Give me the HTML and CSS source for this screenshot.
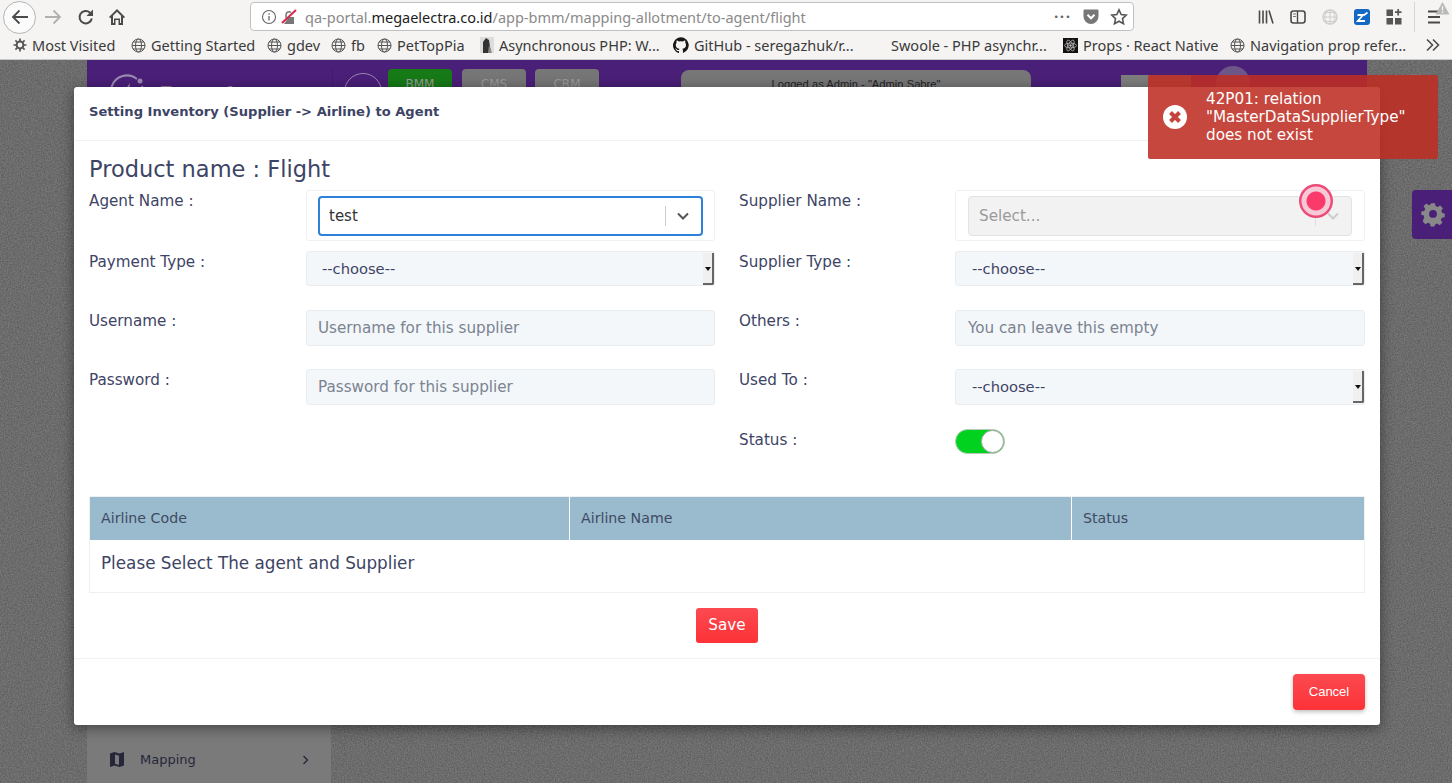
FILE: index.html
```html
<!DOCTYPE html>
<html lang="en">
<head>
  <meta charset="UTF-8" />
  <title>Mapping Allotment</title>
  <link rel="stylesheet" href="styles.css">
</head>
<body>
  <div class="toolbar">
    <button class="back-btn" title="Back">
      <svg width="18" height="18" viewBox="0 0 18 18"><path d="M17 9H2M8.500 2.500 2 9l6.500 6.500" fill="none" stroke="#4a4a4a" stroke-width="1.800"/></svg>
    </button>
    <svg class="tool-icon forward" width="18" height="18" viewBox="0 0 18 18"><path d="M1 9h15M9.500 2.500 16 9l-6.500 6.500" fill="none" stroke="#b0b0b0" stroke-width="1.800"/></svg>
    <svg class="tool-icon reload" width="18" height="18" viewBox="0 0 18 18"><path d="M14.800 10.500a6.200 6.200 0 1 1-1.800-5.800L15 6.800" fill="none" stroke="#4a4a4a" stroke-width="2"/><path d="M16 1.500v6.500H9.500z" fill="#4a4a4a"/></svg>
    <svg class="tool-icon home" width="18" height="18" viewBox="0 0 18 18"><path d="M9 1 1 9l1.300 1.300L3 9.600V17h4.500v-5h3v5H15V9.600l.7.7L17 9z" fill="#4a4a4a"/><path d="M9 3.800 5 7.800V15h1V10.500h6V15h1V7.800z" fill="#f5f4f3"/></svg>
    <div class="urlbar">
      <svg class="url-info" width="16" height="16" viewBox="0 0 16 16"><circle cx="8" cy="8" r="6.500" fill="none" stroke="#666" stroke-width="1.100"/><path d="M8 7v4.500M8 4.300v1.400" stroke="#666" stroke-width="1.300"/></svg>
      <svg class="url-lock" width="16" height="16" viewBox="0 0 16 16"><path d="M3 15 8 8h5v7z" fill="#777"/><path d="M5 9V5.500a3 3 0 0 1 5-2" fill="none" stroke="#777" stroke-width="1.500"/><path d="M1 14 15 1" stroke="#d7264a" stroke-width="2"/></svg>
      <div class="url-text">qa-portal.<span class="url-domain">megaelectra.co.id</span>/app-bmm/mapping-allotment/to-agent/flight</div>
      <div class="url-dots">•••</div>
      <svg class="url-pocket" width="18" height="18" viewBox="0 0 18 18"><path d="M2.500 1.500h13a1 1 0 0 1 1 1v6a7.500 7.500 0 0 1-15 0v-6a1 1 0 0 1 1-1z" fill="#777"/><path d="M5.500 6.800 9 10.300l3.500-3.500" fill="none" stroke="#fff" stroke-width="2"/></svg>
      <svg class="url-star" width="18" height="18" viewBox="0 0 18 18"><path d="m9 1.800 2.200 4.700 5.100.6-3.800 3.500 1 5.100L9 13.200l-4.500 2.500 1-5.100-3.800-3.500 5.100-.6z" fill="none" stroke="#555" stroke-width="1.600"/></svg>
    </div>
    <div class="tool-right">
      <svg width="18" height="18" viewBox="0 0 18 18"><path d="M2.500 2.500v13M6 2.500v13M9.500 2.500v13M12 2.500l4 13" fill="none" stroke="#4a4a4a" stroke-width="1.600"/></svg>
      <svg width="18" height="18" viewBox="0 0 18 18"><rect x="2" y="3" width="14" height="12" rx="2.500" fill="none" stroke="#4a4a4a" stroke-width="1.600"/><path d="M8.500 3v12" stroke="#4a4a4a" stroke-width="1.400"/><path d="M4 6h3M4 8.500h3" stroke="#777"/></svg>
      <svg width="18" height="18" viewBox="0 0 18 18"><circle cx="9" cy="9" r="7" fill="none" stroke="#ccc" stroke-width="1.300"/><path d="M2 9h14M9 2v14M4 4.500h10M4 13.500h10M5.500 3.500c-2 4-2 7 0 11M12.500 3.500c2 4 2 7 0 11" fill="none" stroke="#ccc"/></svg>
      <svg width="18" height="18" viewBox="0 0 18 18"><rect x="1" y="1" width="16" height="16" rx="3" fill="#1268c3"/><path d="M4.500 7h5.500L4.800 13h7.200" fill="none" stroke="#fff" stroke-width="1.800"/><path d="M10.500 7.500l4-3" stroke="#fff" stroke-width="1.600"/></svg>
      <svg width="18" height="18" viewBox="0 0 18 18"><path d="M1.500 1.500h6.500v6.500H1.500zM1.500 10h6.500v6.500H1.500zM10 10h6.500v6.500H10z" fill="#555"/><path d="M13.200 1v6.500M10 4.200h6.500" stroke="#555" stroke-width="1.700"/></svg>
      <div class="tool-sep"></div>
      <div class="menu-btn">
        <svg width="18" height="18" viewBox="0 0 18 18"><path d="M2 3.500h12M2 9h12M2 14.500h12" stroke="#4a4a4a" stroke-width="1.800"/></svg>
        <svg class="menu-alert" width="15" height="14" viewBox="0 0 15 14"><path d="M7.500 1 14.500 13.500H.5z" fill="#b9b9b9"/><path d="M7.500 5v4.500M7.500 10.500v1.500" stroke="#f5f4f3" stroke-width="1.300"/></svg>
      </div>
    </div>
  </div>

  <div class="bookmarks">
    <div class="bm">
      <svg width="14" height="14" viewBox="0 0 14 14"><circle cx="7" cy="7" r="3.400" fill="none" stroke="#555" stroke-width="2"/><path d="M7 .5v3M7 10.500v3M.5 7h3M10.500 7h3M2.400 2.400l2.100 2.100M9.500 9.500l2.100 2.100M2.400 11.600l2.100-2.100M9.500 4.500l2.100-2.100" stroke="#555" stroke-width="1.700"/></svg>
      Most Visited
    </div>
    <div class="bm">
      <svg class="globe" width="15" height="15" viewBox="0 0 15 15"><circle cx="7.500" cy="7.500" r="6.500"/><ellipse cx="7.500" cy="7.500" rx="3" ry="6.500"/><path d="M1 7.500h13M2 4h11M2 11h11"/></svg>
      Getting Started
    </div>
    <div class="bm">
      <svg class="globe" width="15" height="15" viewBox="0 0 15 15"><circle cx="7.500" cy="7.500" r="6.500"/><ellipse cx="7.500" cy="7.500" rx="3" ry="6.500"/><path d="M1 7.500h13M2 4h11M2 11h11"/></svg>
      gdev
    </div>
    <div class="bm">
      <svg class="globe" width="15" height="15" viewBox="0 0 15 15"><circle cx="7.500" cy="7.500" r="6.500"/><ellipse cx="7.500" cy="7.500" rx="3" ry="6.500"/><path d="M1 7.500h13M2 4h11M2 11h11"/></svg>
      fb
    </div>
    <div class="bm">
      <svg class="globe" width="15" height="15" viewBox="0 0 15 15"><circle cx="7.500" cy="7.500" r="6.500"/><ellipse cx="7.500" cy="7.500" rx="3" ry="6.500"/><path d="M1 7.500h13M2 4h11M2 11h11"/></svg>
      PetTopPia
    </div>
    <div class="bm">
      <svg width="14" height="16" viewBox="0 0 14 16"><rect width="14" height="16" fill="#ddd"/><path d="M3 16V5l3-4 3 2 2 13z" fill="#333"/><path d="M9 8l3 8H8z" fill="#888"/></svg>
      Asynchronous PHP: W...
    </div>
    <div class="bm">
      <svg width="16" height="16" viewBox="0 0 16 16"><path d="M8 .3a8 8 0 0 0-2.500 15.600c.4.100.5-.2.500-.4v-1.400c-2.200.5-2.700-1-2.700-1-.4-.9-.9-1.200-.9-1.200-.7-.5.100-.5.100-.5.800.100 1.200.8 1.200.8.700 1.200 1.900.9 2.300.7.100-.5.300-.9.500-1.100-1.800-.2-3.700-.9-3.700-4 0-.9.300-1.600.8-2.100-.1-.2-.4-1 .1-2.100 0 0 .7-.2 2.200.8a7.600 7.600 0 0 1 4 0c1.500-1 2.200-.8 2.200-.8.400 1.100.2 1.900.1 2.100.5.600.8 1.300.8 2.100 0 3.100-1.900 3.700-3.700 3.900.3.300.6.800.6 1.500v2.200c0 .2.100.5.600.4A8 8 0 0 0 8 .3z" fill="#161616"/></svg>
      GitHub - seregazhuk/r...
    </div>
    <div class="bm">Swoole - PHP asynchr...</div>
    <div class="bm">
      <svg width="15" height="15" viewBox="0 0 15 15"><rect width="15" height="15" fill="#111"/><circle cx="7.500" cy="7.500" r="1.200" fill="#bbb"/><g fill="none" stroke="#bbb" stroke-width=".8"><ellipse cx="7.500" cy="7.500" rx="6" ry="2.400"/><ellipse cx="7.500" cy="7.500" rx="6" ry="2.400" transform="rotate(60 7.500 7.500)"/><ellipse cx="7.500" cy="7.500" rx="6" ry="2.400" transform="rotate(120 7.500 7.500)"/></g></svg>
      Props · React Native
    </div>
    <div class="bm">
      <svg class="globe" width="15" height="15" viewBox="0 0 15 15"><circle cx="7.500" cy="7.500" r="6.500"/><ellipse cx="7.500" cy="7.500" rx="3" ry="6.500"/><path d="M1 7.500h13M2 4h11M2 11h11"/></svg>
      Navigation prop refer...
    </div>
    <svg class="bm-more" width="15" height="14" viewBox="0 0 15 14"><path d="M2 1.500 7.500 7 2 12.500M8 1.500 13.500 7 8 12.500" fill="none" stroke="#4a4a4a" stroke-width="1.600"/></svg>
  </div>

  <div class="page">
    <svg class="paper" width="1452" height="723">
      <filter id="grain">
        <feTurbulence type="fractalNoise" baseFrequency="0.7" numOctaves="2" seed="4"/>
        <feColorMatrix values="0 0 0 0 0  0 0 0 0 0  0 0 0 0 0  0.400 0 0 0 -0.100"/>
      </filter>
      <rect width="1452" height="723" filter="url(#grain)"/>
    </svg>

    <div class="app">
      <div class="app-head">
        <div class="app-logo">
          <svg width="36" height="36" viewBox="0 0 36 36"><path d="M27 5a16 16 0 1 0 5 7" fill="none" stroke="#9a8ab0" stroke-width="2"/><circle cx="30" cy="7" r="2.500" fill="#9a8ab0"/><path d="M12 20 20 9l-1 8 5 1-8 9 1-7z" fill="#9a8ab0"/></svg>
          <span class="app-name">Portal</span>
        </div>
        <div class="app-menu"></div>
        <div class="app-tab app-tab-on">BMM</div>
        <div class="app-tab">CMS</div>
        <div class="app-tab">CRM</div>
        <div class="app-logged">Logged as Admin - "Admin Sabre"</div>
        <div class="app-user"></div>
        <div class="app-avatar"></div>
      </div>
      <div class="app-side">
        <div class="side-item">
          <svg width="14" height="15" viewBox="0 0 14 15"><path d="M0 1.500 4.500 0l5 1.500L14 0v13.500L9.500 15l-5-1.500L0 15zM5 2.500v9.300l4 1.200V3.700z" fill="#26263a" fill-rule="evenodd"/></svg>
          <span class="side-label">Mapping</span>
          <svg class="side-arrow" width="7" height="10" viewBox="0 0 7 10"><path d="M1.500 1 5.500 5l-4 4" fill="none" stroke="#26263a" stroke-width="1.300"/></svg>
        </div>
      </div>
    </div>

    <div class="gear-tab">
      <svg width="26" height="26" viewBox="0 0 24 24"><path fill="#888" fill-rule="evenodd" d="M10 1h4l.6 3 2.200 1 2.600-1.700 2.800 2.800L20.500 8.700l1 2.300 2.500.5v4l-3 .5-1 2.200 1.700 2.600-2.800 2.800-2.600-1.700-2.200 1-.6 2.100h-4l-.5-3-2.200-1-2.600 1.700-2.800-2.800L3 15.300 2 13H0V9.500l3-.6 1-2.200L2.300 4.100l2.800-2.800L7.700 3l2-1zM12 8a4 4 0 1 0 0 8 4 4 0 0 0 0-8z" transform="translate(1.200 .2) scale(.9)"/></svg>
    </div>

    <div class="modal">
      <div class="modal-head">Setting Inventory (Supplier -&gt; Airline) to Agent</div>
      <div class="modal-body">
        <h4 class="product-name">Product name : Flight</h4>
        <div class="form-grid">
          <div class="form-col">
            <div class="form-row row-agent">
              <label>Agent Name :</label>
              <div class="picker-wrap">
                <div class="picker picker-focus">
                  <span class="picker-value">test</span>
                  <span class="picker-sep"></span>
                  <svg width="14" height="9" viewBox="0 0 14 9"><path d="M2 1.500 7 6.500l5-5" fill="none" stroke="#555" stroke-width="2"/></svg>
                </div>
              </div>
            </div>
            <div class="form-row row-select">
              <label>Payment Type :</label>
              <div class="native-select">--choose--<span class="native-arrow"></span></div>
            </div>
            <div class="form-row row-input">
              <label>Username :</label>
              <div class="text-input">Username for this supplier</div>
            </div>
            <div class="form-row row-input">
              <label>Password :</label>
              <div class="text-input">Password for this supplier</div>
            </div>
          </div>
          <div class="form-col form-col-right">
            <div class="form-row row-agent">
              <label>Supplier Name :</label>
              <div class="picker-wrap">
                <div class="picker picker-off">
                  <span class="picker-holder">Select...</span>
                  <span class="picker-sep"></span>
                  <svg width="14" height="9" viewBox="0 0 14 9"><path d="M2 1.500 7 6.500l5-5" fill="none" stroke="#ccc" stroke-width="2"/></svg>
                </div>
              </div>
            </div>
            <div class="form-row row-select">
              <label>Supplier Type :</label>
              <div class="native-select">--choose--<span class="native-arrow"></span></div>
            </div>
            <div class="form-row row-input">
              <label>Others :</label>
              <div class="text-input">You can leave this empty</div>
            </div>
            <div class="form-row row-input">
              <label>Used To :</label>
              <div class="native-select">--choose--<span class="native-arrow"></span></div>
            </div>
            <div class="form-row row-status">
              <label>Status :</label>
              <div class="switch"><span class="switch-knob"></span></div>
            </div>
          </div>
        </div>

        <table class="airline-table">
          <thead>
            <tr><th class="col-code">Airline Code</th><th class="col-name">Airline Name</th><th>Status</th></tr>
          </thead>
          <tbody>
            <tr><td colspan="3">Please Select The agent and Supplier</td></tr>
          </tbody>
        </table>

        <div class="save-row"><button class="btn-save">Save</button></div>
      </div>
      <div class="modal-foot"><button class="btn-cancel">Cancel</button></div>
    </div>

    <div class="click-dot"></div>

    <div class="toast">
      <svg width="24" height="24" viewBox="0 0 24 24"><circle cx="12" cy="12" r="12" fill="#fff"/><path d="M7.500 7.500l9 9M16.500 7.500l-9 9" stroke="#c4453d" stroke-width="4"/></svg>
      <div class="toast-text">42P01: relation<br>"MasterDataSupplierType"<br>does not exist</div>
    </div>
  </div>
</body>
</html>
```

FILE: styles.css
```css
* {
  box-sizing: border-box;
}
html, body {
  margin: 0;
  height: 783px;
  overflow: hidden;
}
body {
  font-family: "DejaVu Sans", sans-serif;
  color: #3d4465;
  background: #787878;
}
button {
  font-family: inherit;
}

/* browser chrome */
.toolbar {
  height: 34px;
  display: flex;
  align-items: center;
  padding-left: 3px;
  background: #f5f4f3;
}
.back-btn {
  width: 33px;
  height: 33px;
  padding: 0;
  display: flex;
  align-items: center;
  justify-content: center;
  border: 1px solid #b4b4b4;
  border-radius: 50%;
  background: #fbfbfb;
}
.tool-icon {
  flex: none;
}
.forward {
  margin-left: 8px;
}
.reload {
  margin-left: 15px;
}
.home {
  margin-left: 13px;
}
.urlbar {
  width: 884px;
  height: 29px;
  margin-left: 124px;
  margin-top: -1px;
  padding: 0 5px 0 10px;
  display: flex;
  align-items: center;
  background: #fff;
  border: 1px solid #c0c0c0;
  border-radius: 4px;
}
.url-lock {
  margin-left: 4px;
}
.url-text {
  margin-left: 8px;
  flex: 1;
  font: 14.500px "Noto Sans", sans-serif;
  color: #8a8a8a;
  white-space: nowrap;
}
.url-domain {
  color: #1c1c1c;
}
.url-dots {
  font: 9px "DejaVu Sans", sans-serif;
  letter-spacing: 0.5px;
  color: #666;
}
.url-pocket {
  margin-left: 11px;
}
.url-star {
  margin-left: 10px;
}
.tool-right {
  margin-left: 123px;
  flex: 1;
  display: flex;
  align-items: center;
  gap: 14px;
}
.tool-sep {
  width: 1px;
  height: 30px;
  margin-left: -3px;
  margin-right: -3px;
  background: #d6d6d6;
}
.menu-btn {
  position: relative;
  height: 18px;
}
.menu-alert {
  position: absolute;
  left: 9px;
  top: -7px;
}

.bookmarks {
  height: 26px;
  padding: 0 0 3px 13px;
  display: flex;
  align-items: center;
  background: #f5f4f3;
  border-bottom: 1px solid #c9c9c9;
  font: 14.500px "Noto Sans", sans-serif;
  color: #3a3a3a;
  white-space: nowrap;
}
.bm {
  flex: none;
  display: flex;
  align-items: center;
  gap: 5px;
}
.bm:nth-child(1) { width: 118px; }
.bm:nth-child(2) { width: 136px; }
.bm:nth-child(3) { width: 64px; }
.bm:nth-child(4) { width: 46px; }
.bm:nth-child(5) { width: 103px; }
.bm:nth-child(6) { width: 193px; }
.bm:nth-child(7) { width: 218px; }
.bm:nth-child(8) { width: 172px; }
.bm:nth-child(9) { width: 167px; }
.bm:nth-child(10) { width: 195px; }
.globe {
  fill: none;
  stroke: #555;
  stroke-width: 1;
}

/* app behind the modal */
.page {
  position: relative;
  height: 723px;
  overflow: hidden;
}
.paper {
  position: absolute;
  left: 0;
  top: 0;
}
.app {
  position: relative;
  width: 1280px;
  height: 723px;
  margin-left: 87px;
}
.app-head {
  height: 27px;
  padding-top: 9px;
  display: flex;
  align-items: flex-start;
  background: #4a1f78;
  color: #999;
}
.app-logo {
  width: 246px;
  height: 80px;
  flex: none;
  padding: 5px 0 0 23px;
  display: flex;
  align-items: flex-start;
  gap: 13px;
  font-size: 22px;
  font-weight: bold;
  color: #8d7ba3;
  border-right: 1px solid #431b6d;
}
.app-name {
  padding-top: 14px;
  line-height: 14px;
}
.app-menu {
  width: 38px;
  height: 38px;
  flex: none;
  margin: 4px 6px 0 11px;
  border: 1px solid #9a86b2;
  border-radius: 50%;
}
.app-tab {
  width: 64px;
  height: 40px;
  flex: none;
  margin-right: 10px;
  padding-top: 8px;
  text-align: center;
  font-size: 12px;
  background: #767676;
  border-radius: 4px;
}
.app-tab:nth-child(4) {
  margin-right: 9px;
}
.app-tab-on {
  background: #167a16;
}
.app-logged {
  width: 350px;
  height: 40px;
  flex: none;
  margin-left: 72px;
  margin-top: 1px;
  padding-top: 8px;
  text-align: center;
  font: 11.200px "Liberation Sans", sans-serif;
  color: #222;
  background: #777;
  border-radius: 8px 8px 0 0;
}
.app-user {
  width: 70px;
  height: 30px;
  flex: none;
  margin-left: 90px;
  margin-top: 6px;
  background: #7d7d7d;
}
.app-avatar {
  width: 34px;
  height: 34px;
  flex: none;
  margin-left: 25px;
  margin-top: -3px;
  background: #6e5688;
  border-radius: 50%;
}
.app-side {
  width: 244px;
  height: 696px;
  padding-top: 659px;
  background: #7a7a7a;
}
.side-item {
  height: 27px;
  padding: 0 22px 0 23px;
  display: flex;
  align-items: center;
  font-size: 13px;
  color: #26263a;
}
.side-label {
  margin-left: 16px;
  flex: 1;
}

.gear-tab {
  position: absolute;
  left: 1412px;
  top: 130px;
  width: 40px;
  height: 49px;
  padding-left: 2px;
  display: flex;
  align-items: center;
  justify-content: center;
  background: #4a1f78;
  border-radius: 4px 0 0 4px;
}

/* modal */
.modal {
  position: absolute;
  left: 74px;
  top: 27px;
  width: 1306px;
  height: 638px;
  background: #fff;
  border-radius: 3px;
  box-shadow: 0 3px 14px rgba(0, 0, 0, 0.45);
}
.modal-head {
  height: 54px;
  padding: 17px 15px 0;
  font-size: 13.100px;
  font-weight: bold;
  color: #3d4465;
  border-bottom: 1px solid #f2f2f2;
}
.modal-body {
  height: 518px;
  padding: 14px 15px 0;
  border-bottom: 1px solid #f2f2f2;
}
.product-name {
  margin: 0;
  height: 35px;
  font-size: 22.500px;
  font-weight: normal;
  line-height: 28px;
}
.form-grid {
  display: grid;
  grid-template-columns: 626px 626px;
  gap: 24px;
  height: 306px;
}
.form-row {
  display: flex;
}
.form-row label {
  width: 217px;
  flex: none;
  padding-top: 2px;
  font-size: 15.200px;
  line-height: 18px;
}
.form-col-right .form-row label {
  width: 216px;
}
.row-agent {
  height: 61px;
}
.row-select {
  height: 59px;
}
.row-input {
  height: 59px;
}
.row-status {
  height: 50px;
}
.form-row.row-status label {
  padding-top: 3px;
}
.picker-wrap {
  flex: 1;
  height: 51px;
  padding: 5px 11px 0;
  border: 1px solid #f0f1f3;
  border-radius: 3px;
}
.form-col-right .picker-wrap {
  padding: 5px 12px 0;
}
.picker {
  height: 40px;
  padding: 0 11px 0 9px;
  display: flex;
  align-items: center;
  border-radius: 4px;
  font-size: 15px;
}
.picker-focus {
  border: 2px solid #2f80d8;
  color: #333;
}
.picker-off {
  padding-left: 10px;
  background: #f2f2f2;
  border: 1px solid #e4e4e4;
  font-size: 15.200px;
}
.picker-value, .picker-holder {
  flex: 1;
}
.picker-holder {
  color: #9a9a9a;
}
.picker-sep {
  width: 1px;
  height: 20px;
  margin-right: 10px;
  background: #ccc;
}
.picker-off .picker-sep {
  background: #ddd;
}
.native-select, .text-input {
  flex: 1;
  display: flex;
  align-items: center;
  background: #f3f7fa;
  border: 1px solid #e9edf0;
  border-radius: 3px;
}
.native-select {
  position: relative;
  height: 35px;
  padding: 0 0 1px 15px;
  font-size: 14.700px;
  color: #3d4465;
}
.row-input .native-select {
  height: 36px;
  padding-bottom: 2px;
}
.form-col-right .native-select {
  padding-left: 16px;
}
.native-arrow {
  position: absolute;
  top: 1px;
  right: 0;
  width: 11px;
  height: 32px;
  background: #f0f0f0;
  border-right: 2px solid #666;
  border-bottom: 2px solid #666;
  border-radius: 0 0 2px 0;
}
.native-arrow::after {
  content: "";
  position: absolute;
  left: 2px;
  top: 14px;
  border: 3px solid transparent;
  border-top: 4px solid #111;
  border-bottom: 0;
}
.text-input {
  height: 36px;
  padding-left: 11px;
  font-size: 15.200px;
  color: #7b8390;
}
.form-col-right .text-input {
  padding-left: 12px;
}
.switch {
  position: relative;
  width: 50px;
  height: 25px;
  margin-top: 1px;
  background: #00d21f;
  border: 1px solid #b8c8b8;
  border-radius: 13px;
}
.switch-knob {
  position: absolute;
  right: 0;
  top: 0;
  width: 23px;
  height: 23px;
  background: #fff;
  border: 1px solid #aaa;
  border-radius: 50%;
}

.airline-table {
  width: 100%;
  border-collapse: collapse;
  table-layout: fixed;
  border: 1px solid #eef0f2;
}
.airline-table th {
  height: 43px;
  padding: 0 11px;
  text-align: left;
  font-size: 14.200px;
  font-weight: normal;
  color: #3f4a63;
  background: #99bbcd;
  border-right: 1px solid #fff;
}
.airline-table th:last-child {
  border-right: 0;
}
.col-code {
  width: 480px;
}
.col-name {
  width: 502px;
}
.airline-table td {
  height: 53px;
  padding: 0 11px 6px;
  font-size: 16.800px;
}
.save-row {
  padding-top: 15px;
  display: flex;
  justify-content: center;
}
.btn-save {
  width: 62px;
  height: 35px;
  padding: 0 0 2px;
  font-size: 15.200px;
  color: #fff;
  background: linear-gradient(#fb4a50, #fc3238);
  border: 0;
  border-radius: 3px;
}
.modal-foot {
  padding: 15px 15px 0;
  display: flex;
  justify-content: flex-end;
}
.btn-cancel {
  width: 72px;
  height: 36px;
  padding: 0 0 2px;
  font: 13px "Liberation Sans", sans-serif;
  color: #fff;
  background: linear-gradient(#fb4a50, #fc3238);
  border: 0;
  border-radius: 4px;
  box-shadow: 0 2px 4px rgba(0, 0, 0, 0.25);
}

/* overlays */
.click-dot {
  position: absolute;
  left: 1299px;
  top: 124px;
  width: 34px;
  height: 34px;
  background: radial-gradient(circle, #fb3a6c 0 9px, #f7c9d6 10px 14px, #ed4a78 15px);
  border-radius: 50%;
}
.toast {
  position: absolute;
  left: 1148px;
  top: 15px;
  width: 290px;
  height: 84px;
  padding-left: 15px;
  display: flex;
  align-items: center;
  gap: 19px;
  color: #fff;
  background: rgba(190, 45, 35, 0.88);
  border-radius: 2px;
}
.toast-text {
  font-size: 15.200px;
  line-height: 18px;
}
```
